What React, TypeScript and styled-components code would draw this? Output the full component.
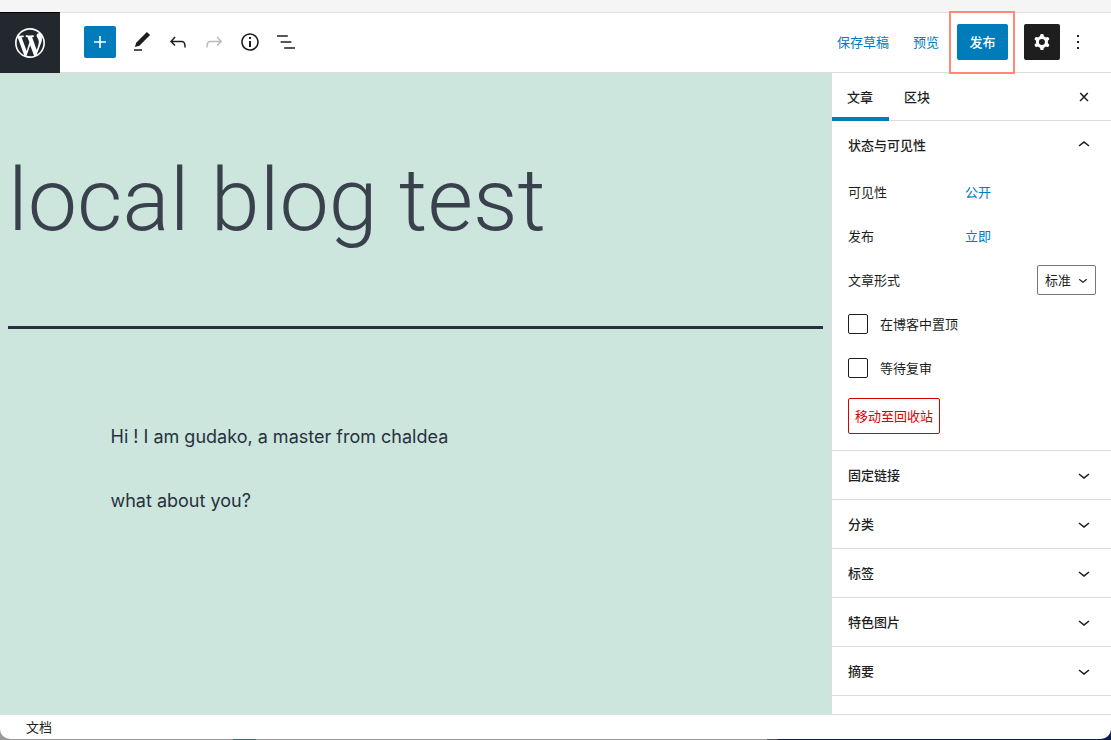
import React from "react";
import styled, { createGlobalStyle } from "styled-components";

const blue = "#007cba";
const ink = "#1e1e1e";
const line = "#dddddd";

const GlobalStyle = createGlobalStyle`
  *, *::before, *::after { box-sizing: border-box; }
  html, body, #root { height: 100%; }
  body {
    margin: 0;
    color: ${ink};
    font: 13px/20px "Noto Sans CJK SC", "Noto Sans", sans-serif;
  }
  button, select, input { font: inherit; color: inherit; }
  button { cursor: pointer; }
`;

const Desktop = styled.div`
  height: 100%;
  padding-bottom: 1px;
  background: linear-gradient(90deg, #999 0 21%, #3f6678 21% 23%, #999 23% 69%, #555 69% 70%, #0b1f52 70%);
`;

const Window = styled.div`
  height: 100%;
  display: flex;
  flex-direction: column;
  overflow: hidden;
  background: #fff;
  border-radius: 0 0 10px 10px;
`;

const BrowserEdge = styled.div`
  flex: none;
  height: 12px;
  background: #f5f5f5;
`;

const Header = styled.header`
  flex: none;
  display: flex;
  align-items: center;
  height: 61px;
  border-bottom: 1px solid ${line};
  box-shadow: inset 0 1px ${line};
`;

const HomeLink = styled.a`
  display: flex;
  align-items: center;
  justify-content: center;
  width: 60px;
  height: 61px;
  margin-bottom: -1px;
  background: #23282e;
  border-top: 1px solid #000;
  color: #fff;
`;

const Tools = styled.div`
  display: flex;
  align-items: center;
  flex: 1;
  padding-left: 24px;
`;

const IconButton = styled.button<{ $tone?: "plain" | "primary" | "dark"; $size?: number }>`
  display: flex;
  flex: none;
  align-items: center;
  justify-content: center;
  width: ${(p) => p.$size ?? 36}px;
  height: ${(p) => p.$size ?? 36}px;
  padding: 0;
  border: 0;
  border-radius: 2px;
  background: ${(p) => (p.$tone === "primary" ? blue : p.$tone === "dark" ? ink : "transparent")};
  color: ${(p) => (p.$tone === "primary" || p.$tone === "dark" ? "#fff" : ink)};
  &:disabled { color: #bbb; }
`;

const AddButton = styled(IconButton)`
  margin-right: 8px;
`;

const Actions = styled.div`
  display: flex;
  align-items: center;
  padding-right: 15px;
`;

const TextButton = styled.button`
  height: 36px;
  padding: 0;
  margin-right: 24px;
  border: 0;
  background: none;
  color: ${blue};
`;

const PublishWrap = styled.div`
  position: relative;
  margin: 0 16px 0 -6px;
  &::after {
    content: "";
    position: absolute;
    inset: -13px -7px -14px -8px;
    border: 2px solid #ff8878;
    pointer-events: none;
  }
`;

const PublishButton = styled.button`
  height: 36px;
  width: 51px;
  padding: 0;
  border: 0;
  border-radius: 2px;
  background: ${blue};
  color: #fff;
  font-weight: 500;
`;

const Workspace = styled.div`
  flex: 1;
  min-height: 0;
  display: flex;
`;

const Canvas = styled.main`
  flex: 1;
  min-width: 0;
  padding: 68px 8px 0;
  overflow: hidden;
  background: #cce6dd;
  color: #28303d;
`;

const Title = styled.h1`
  margin: 0;
  padding-bottom: 68px;
  border-bottom: 3px solid #28303d;
  color: #39414d;
  font-family: Roboto, "Noto Sans", sans-serif;
  font-size: 88px;
  line-height: 117px;
  font-weight: 300;
`;

const Copy = styled.div`
  max-width: 610px;
  margin: 91px auto 0;
  font-family: Inter, "Noto Sans", sans-serif;
`;

const Paragraph = styled.p`
  margin: 0 0 30px;
  font-size: 18px;
  line-height: 34px;
`;

const Sidebar = styled.aside`
  flex: none;
  width: 280px;
  overflow: hidden;
  border-left: 1px solid ${line};
`;

const Tabs = styled.div`
  display: flex;
  align-items: center;
  height: 48px;
  padding-right: 15px;
  border-bottom: 1px solid ${line};
`;

const Tab = styled.button<{ $active?: boolean }>`
  height: 48px;
  padding: 0 16px 0 15px;
  border: 0;
  background: none;
  box-shadow: ${(p) => (p.$active ? `inset 0 -4px ${blue}` : "none")};
  font-weight: 500;
`;

const CloseButton = styled(IconButton)`
  margin-left: auto;
`;

const Panel = styled.section`
  border-bottom: 1px solid ${line};
`;

const PanelHeading = styled.h2`
  margin: 0;
  font: inherit;
`;

const PanelToggle = styled.button`
  display: flex;
  align-items: center;
  justify-content: space-between;
  width: 100%;
  height: 48px;
  padding: 0 15px 0 16px;
  border: 0;
  background: none;
  font-weight: 500;
`;

const PanelBody = styled.div`
  display: flex;
  flex-direction: column;
  gap: 8px;
  padding: 5px 15px 16px 16px;
`;

const Row = styled.div`
  display: flex;
  align-items: center;
  height: 36px;
`;

const RowLabel = styled.span`
  width: 117px;
`;

const ValueButton = styled.button`
  padding: 0;
  border: 0;
  background: none;
  color: ${blue};
`;

const FormatRow = styled(Row)`
  justify-content: space-between;
`;

const SelectWrap = styled.div`
  position: relative;
  svg {
    position: absolute;
    right: 4px;
    top: 6px;
    pointer-events: none;
  }
`;

const Select = styled.select`
  appearance: none;
  display: block;
  width: 59px;
  height: 30px;
  padding: 0 7px;
  border: 1px solid #757575;
  border-radius: 2px;
  background: #fff;
`;

const CheckRow = styled.label`
  display: flex;
  align-items: center;
  gap: 12px;
  height: 36px;
`;

const Checkbox = styled.input`
  appearance: none;
  width: 20px;
  height: 20px;
  margin: 0;
  border: 1px solid ${ink};
  border-radius: 2px;
  &:checked { background: ${blue}; }
`;

const TrashButton = styled.button`
  align-self: flex-start;
  height: 36px;
  margin-top: 4px;
  padding: 0 6px;
  border: 1px solid #d90000;
  border-radius: 2px;
  background: #fff;
  color: #d90000;
  white-space: nowrap;
`;

const Footer = styled.footer`
  flex: none;
  display: flex;
  align-items: center;
  height: 25px;
  padding-left: 26px;
  border-top: 1px solid ${line};
`;

const paths = {
  plus: "M18 11.2h-5.2V6h-1.6v5.2H6v1.6h5.2V18h1.6v-5.2H18z",
  edit: "M20.1 5.1L16.9 2 6.2 12.7l-1.3 4.4 4.5-1.3L20.1 5.1zM4 20.8h8v-1.5H4v1.5z",
  undo: "M18.3 11.7c-.6-.6-1.4-.9-2.3-.9H6.7l2.9-3.3-1.1-1-4.5 5L8.5 16l1-1-2.7-2.7H16c.5 0 .9.2 1.3.5 1 1 1 3.4 1 4.5v.3h1.5v-.2c0-1.5 0-4.3-1.5-5.7z",
  redo: "M15.6 6.5l-1.1 1 2.9 3.3H8c-.9 0-1.7.3-2.3.9-1.4 1.5-1.4 4.2-1.4 5.6v.2h1.5v-.3c0-1.1 0-3.5 1-4.5.3-.3.7-.5 1.3-.5h9.2L14.5 15l1.1 1.1 4.6-4.6-4.6-5z",
  info: "M12 3.2c-4.8 0-8.8 3.9-8.8 8.8 0 4.8 3.9 8.8 8.8 8.8 4.8 0 8.8-3.9 8.8-8.8 0-4.8-4-8.8-8.8-8.8zm0 16c-4 0-7.2-3.3-7.2-7.2C4.8 8 8 4.8 12 4.8s7.2 3.3 7.2 7.2c0 4-3.2 7.2-7.2 7.2zM11 17h2v-6h-2v6zm0-8h2V7h-2v2z",
  outline: "M13.8 5.2H3v1.5h10.8V5.2zm-3.6 12v1.5H21v-1.5H10.2zm7.2-6H6.6v1.5h10.8v-1.5z",
  cog: "M10.289 4.836A1 1 0 0111.275 4h1.306a1 1 0 01.987.836l.244 1.466c.787.26 1.503.679 2.108 1.218l1.393-.522a1 1 0 011.216.437l.653 1.13a1 1 0 01-.23 1.273l-1.148.944a6.025 6.025 0 010 2.435l1.149.946a1 1 0 01.23 1.272l-.653 1.13a1 1 0 01-1.216.437l-1.394-.522c-.605.54-1.32.958-2.108 1.218l-.244 1.466a1 1 0 01-.987.836h-1.306a1 1 0 01-.986-.836l-.244-1.466a5.995 5.995 0 01-2.108-1.218l-1.394.522a1 1 0 01-1.217-.436l-.653-1.131a1 1 0 01.23-1.272l1.149-.946a6.026 6.026 0 010-2.435l-1.148-.944a1 1 0 01-.23-1.272l.653-1.131a1 1 0 011.217-.437l1.393.522a5.994 5.994 0 012.108-1.218l.244-1.466zM14.929 12a3 3 0 11-6 0 3 3 0 016 0z",
  more: "M13 19h-2v-2h2v2zm0-6h-2v-2h2v2zm0-6h-2V5h2v2z",
  close: "M13 11.9l3.3-3.4-1.1-1-3.2 3.3-3.2-3.3-1.1 1 3.3 3.4-3.5 3.6 1 1L12 13l3.5 3.5 1-1z",
  up: "M6.5 12.4L12 8l5.5 4.4-.9 1.2L12 10l-4.5 3.6-1-1.2z",
  down: "M17.5 11.6L12 16l-5.5-4.4.9-1.2L12 14l4.5-3.6 1 1.2z",
};

function Icon({ name, size = 24 }: { name: keyof typeof paths; size?: number }) {
  return (
    <svg width={size} height={size} viewBox="0 0 24 24" fill="currentColor" aria-hidden="true">
      <path fillRule="evenodd" clipRule="evenodd" d={paths[name]} />
    </svg>
  );
}

function WordPressMark() {
  return (
    <svg width="36" height="36" viewBox="-2 -2 24 24" fill="currentColor" aria-hidden="true">
      <path d="M20 10c0-5.51-4.49-10-10-10C4.48 0 0 4.49 0 10c0 5.52 4.48 10 10 10 5.51 0 10-4.48 10-10zM7.78 15.37L4.37 6.22c.55-.02 1.17-.08 1.17-.08.5-.06.44-1.13-.06-1.11 0 0-1.45.11-2.37.11-.18 0-.37 0-.58-.01C4.12 2.69 6.87 1.11 10 1.11c2.33 0 4.45.87 6.05 2.34-.68-.11-1.65.39-1.65 1.58 0 .74.45 1.36.9 2.1.35.61.55 1.36.55 2.46 0 1.49-1.4 5-1.4 5l-3.03-8.37c.54-.02.82-.17.82-.17.5-.05.44-1.25-.06-1.22 0 0-1.44.12-2.38.12-.87 0-2.33-.12-2.33-.12-.5-.03-.56 1.2-.06 1.22l.92.08 1.26 3.41zM17.41 10c.24-.64.74-1.87.43-4.25.7 1.29 1.05 2.71 1.05 4.25 0 3.29-1.73 6.24-4.4 7.78.97-2.59 1.94-5.2 2.92-7.78zM6.1 18.09C3.12 16.65 1.11 13.53 1.11 10c0-1.3.23-2.48.72-3.59C3.25 10.3 4.67 14.2 6.1 18.09zm4.03-6.63l2.58 6.98c-.86.29-1.76.45-2.71.45-.79 0-1.57-.11-2.29-.33.81-2.38 1.62-4.74 2.42-7.1z" />
    </svg>
  );
}

const closedPanels = ["固定链接", "分类", "标签", "特色图片", "摘要"];

export default function App() {
  return (
    <>
      <GlobalStyle />
      <Desktop>
        <Window>
          <BrowserEdge />
          <Header>
            <HomeLink href="#" aria-label="WordPress">
              <WordPressMark />
            </HomeLink>
            <Tools>
              <AddButton $tone="primary" $size={32} aria-label="添加区块"><Icon name="plus" /></AddButton>
              <IconButton aria-label="工具"><Icon name="edit" /></IconButton>
              <IconButton aria-label="撤销"><Icon name="undo" /></IconButton>
              <IconButton aria-label="重做" disabled><Icon name="redo" /></IconButton>
              <IconButton aria-label="详情"><Icon name="info" /></IconButton>
              <IconButton aria-label="大纲"><Icon name="outline" /></IconButton>
            </Tools>
            <Actions>
              <TextButton>保存草稿</TextButton>
              <TextButton>预览</TextButton>
              <PublishWrap><PublishButton>发布</PublishButton></PublishWrap>
              <IconButton $tone="dark" aria-label="设置"><Icon name="cog" /></IconButton>
              <IconButton aria-label="选项"><Icon name="more" /></IconButton>
            </Actions>
          </Header>
          <Workspace>
            <Canvas>
              <Title>local blog test</Title>
              <Copy>
                <Paragraph>Hi ! I am gudako, a master from chaldea</Paragraph>
                <Paragraph>what about you?</Paragraph>
              </Copy>
            </Canvas>
            <Sidebar>
              <Tabs>
                <Tab $active>文章</Tab>
                <Tab>区块</Tab>
                <CloseButton $size={24} aria-label="关闭"><Icon name="close" /></CloseButton>
              </Tabs>
              <Panel>
                <PanelHeading>
                  <PanelToggle aria-expanded="true">状态与可见性<Icon name="up" /></PanelToggle>
                </PanelHeading>
                <PanelBody>
                  <Row><RowLabel>可见性</RowLabel><ValueButton>公开</ValueButton></Row>
                  <Row><RowLabel>发布</RowLabel><ValueButton>立即</ValueButton></Row>
                  <FormatRow>
                    <label htmlFor="format">文章形式</label>
                    <SelectWrap>
                      <Select id="format"><option>标准</option></Select>
                      <Icon name="down" size={18} />
                    </SelectWrap>
                  </FormatRow>
                  <CheckRow><Checkbox type="checkbox" />在博客中置顶</CheckRow>
                  <CheckRow><Checkbox type="checkbox" />等待复审</CheckRow>
                  <TrashButton>移动至回收站</TrashButton>
                </PanelBody>
              </Panel>
              {closedPanels.map((title) => (
                <Panel key={title}>
                  <PanelHeading>
                    <PanelToggle aria-expanded="false">{title}<Icon name="down" /></PanelToggle>
                  </PanelHeading>
                </Panel>
              ))}
            </Sidebar>
          </Workspace>
          <Footer>文档</Footer>
        </Window>
      </Desktop>
    </>
  );
}
